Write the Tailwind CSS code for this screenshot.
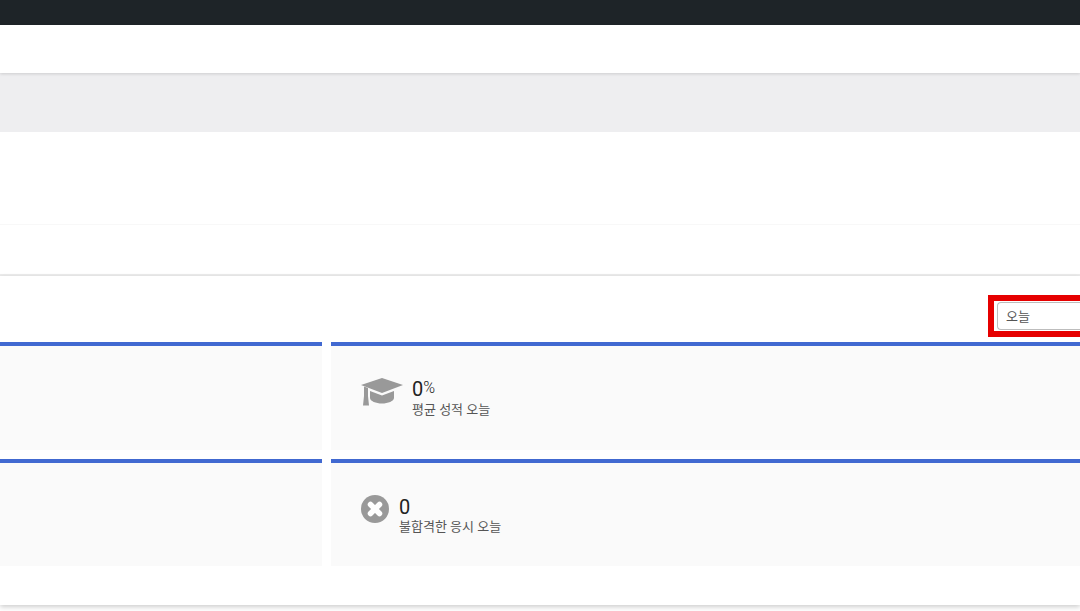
<!DOCTYPE html>
<html lang="ko">
<head>
<meta charset="UTF-8">
<title>Dashboard</title>
<script src="https://cdn.jsdelivr.net/npm/@tailwindcss/browser@4"></script>
</head>
<body class="bg-white h-[611px] w-[1080px] overflow-hidden font-['Roboto','Noto_Sans_CJK_KR',sans-serif]">
  <div class="h-[25px] bg-[#1e2428]"></div>
  <div class="h-[48px] bg-white shadow-[0_1px_3px_rgba(0,0,0,0.14)] relative"></div>
  <div class="h-[59px] bg-[#eeeef0]"></div>
  <div class="h-[93px] bg-white border-b border-[#f8f8f8]"></div>
  <div class="h-[51px] bg-white border-b-2 border-[#ececec]"></div>

  <div class="h-[329px] bg-white shadow-[0_2px_5px_rgba(0,0,0,0.2)]">
    <div class="h-[66px] flex justify-end items-start pt-[19px]">
      <div class="w-[92px] h-[42px] border-[6px] border-[#e60000] border-r-0 pl-[3px] flex items-center">
        <div class="w-full h-[28px] border border-r-0 border-[#bdbdbd] rounded-l-[4px] pl-[8px] pt-[2px] flex items-center text-[13px] text-[#555]">오늘</div>
      </div>
    </div>
    <div class="grid grid-cols-[322px_1fr] gap-x-[9px] gap-y-[9px]">
      <div class="h-[108px] bg-[#fafafa] border-t-4 border-[#4169d1]"></div>
      <div class="h-[108px] bg-[#fafafa] border-t-4 border-[#4169d1] flex items-start pl-[30px] pt-[32px] gap-[9px]">
        <svg class="w-[42px] h-[28px] shrink-0" viewBox="0 0 42 28" fill="#999">
          <path d="M21 0 42 7 21 15 0 7Z"/>
          <path d="M3 8.5 7 10V18L8 27.5H2L3 18Z"/>
          <path d="M9 13 21 17.5 33 13V20C33 23 27 25.5 21 25.5S9 23 9 20Z"/>
        </svg>
        <div>
          <div class="text-[20px] leading-[23px] text-[#222]">0<span class="text-[16px] leading-none align-[3px] font-light">%</span></div>
          <div class="text-[13px] leading-[18px] text-[#555]">평균 성적 오늘</div>
        </div>
      </div>
      <div class="h-[107px] bg-[#fafafa] border-t-4 border-[#4169d1]"></div>
      <div class="h-[107px] bg-[#fafafa] border-t-4 border-[#4169d1] flex items-start pl-[30px] pt-[32px] gap-[10px]">
        <svg class="w-[28px] h-[28px] shrink-0" viewBox="0 0 28 28">
          <circle cx="14" cy="14" r="14" fill="#999"/>
          <path d="M9.5 9.5 18.5 18.5M18.5 9.5 9.5 18.5" stroke="#fff" stroke-width="5.5" stroke-linecap="round"/>
        </svg>
        <div class="mt-[1px]">
          <div class="text-[20px] leading-[22px] text-[#222]">0</div>
          <div class="text-[13px] leading-[18px] text-[#555]">불합격한 응시 오늘</div>
        </div>
      </div>
    </div>
  </div>
</body>
</html>
